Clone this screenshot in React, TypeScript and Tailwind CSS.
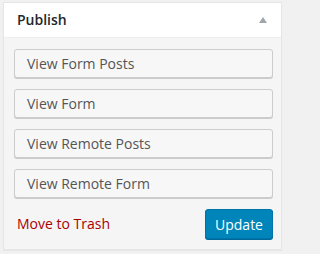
const actions = ['View Form Posts', 'View Form', 'View Remote Posts', 'View Remote Form']

export default function App() {
  return (
    <div className="w-full min-h-[254px] bg-[#f1f1f1] pt-[2px] pl-[3px]" style={{ fontFamily: '"Open Sans", "Noto Sans", sans-serif' }}>
      <div className="w-[279px] border border-[#e5e5e5] bg-white shadow-[0_1px_1px_rgba(0,0,0,0.04)]">
        <div className="h-[35px] flex items-center justify-between pl-[13px] pr-[13px] border-b border-[#eeeeee]">
          <span className="text-[14px] text-[#23282d] font-semibold leading-none">Publish</span>
          <svg width="8" height="6" viewBox="0 0 8 6" className="mr-[1px]">
            <path d="M0 6 L4 0 L8 6 Z" fill="#a0a5aa" />
          </svg>
        </div>
        <div className="bg-[#f5f5f5] pt-[11px] pb-[10px] pl-[10px] pr-[8px]">
          <div className="flex flex-col gap-[11px]">
            {actions.map((label) => (
              <button
                key={label}
                className="h-[29px] w-full text-left pl-[12px] text-[14px] text-[#555] bg-[#f7f7f7] border border-[#cccccc] rounded-[3px] shadow-[0_1px_0_#cccccc]"
              >
                {label}
              </button>
            ))}
          </div>
          <div className="flex items-center justify-between mt-[11px]">
            <a className="pl-[3px] text-[14px] text-[#a00] leading-none">Move to Trash</a>
            <button className="h-[30px] w-[68px] text-[14px] text-white bg-[#0085ba] border border-[#0073aa] rounded-[3px] shadow-[0_1px_0_#006799]">
              Update
            </button>
          </div>
        </div>
      </div>
    </div>
  )
}
